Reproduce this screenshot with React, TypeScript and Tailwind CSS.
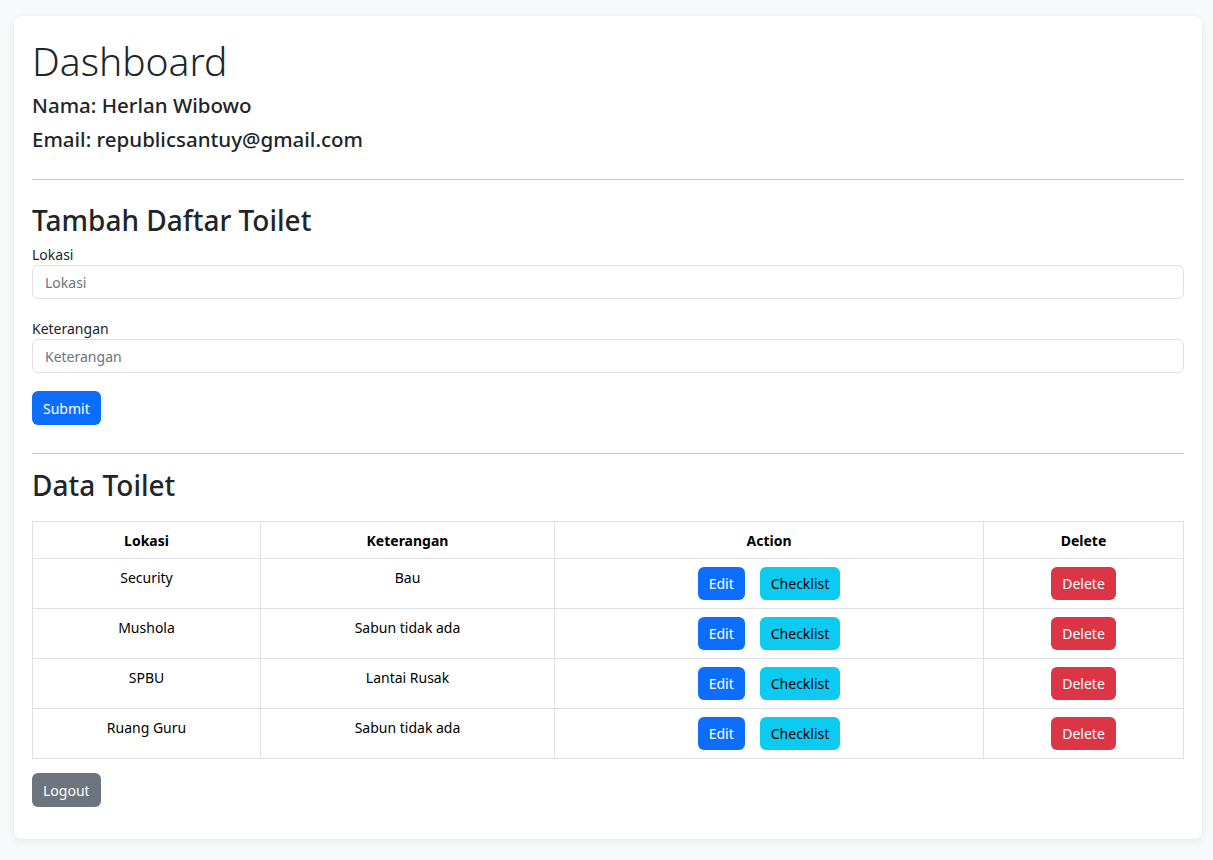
const rows = [
  { lokasi: "Security", keterangan: "Bau" },
  { lokasi: "Mushola", keterangan: "Sabun tidak ada" },
  { lokasi: "SPBU", keterangan: "Lantai Rusak" },
  { lokasi: "Ruang Guru", keterangan: "Sabun tidak ada" },
];

const font = { fontFamily: '"Noto Sans", "Open Sans", sans-serif' };

export default function App() {
  return (
    <div className="min-h-[860px] bg-[#f8f9fa] pt-[16px] pb-[22px] text-[#212529]" style={font}>
      <div className="ml-[14px] mr-[11px] rounded-lg bg-white px-[18px] pt-[21px] pb-[32px] shadow-[0_2px_8px_rgba(0,0,0,0.08)]">
        <h1 className="text-[39px] font-light leading-[48px] mb-2">Dashboard</h1>
        <h5 className="text-[20.5px] font-medium leading-[24px] mb-[10px]">Nama: Herlan Wibowo</h5>
        <h5 className="text-[20.5px] font-medium leading-[24px]">Email: republicsantuy@gmail.com</h5>

        <hr className="mt-[28px] mb-[23px] border-t border-[#c8c9ca]" />

        <h2 className="text-[28px] font-medium leading-[34px] mb-[7px]">Tambah Daftar Toilet</h2>
        <form>
          <label className="block text-[14px] leading-[21px]">Lokasi</label>
          <input
            placeholder="Lokasi"
            className="block w-full h-[34px] rounded-md border border-[#dee2e6] px-3 text-[14px] placeholder:text-[#6c757d] outline-none"
          />
          <label className="block text-[14px] leading-[21px] mt-[19px]">Keterangan</label>
          <input
            placeholder="Keterangan"
            className="block w-full h-[34px] rounded-md border border-[#dee2e6] px-3 text-[14px] placeholder:text-[#6c757d] outline-none"
          />
          <button
            type="button"
            className="mt-[18px] h-[34px] rounded-md bg-[#0d6efd] px-[11px] text-[14px] text-white"
          >
            Submit
          </button>
        </form>

        <hr className="mt-[28px] mb-[14px] border-t border-[#c8c9ca]" />

        <h2 className="text-[28px] font-medium leading-[34px] mb-[19px]">Data Toilet</h2>
        <table className="w-full table-fixed border-collapse text-[14px] leading-[21px] text-black">
          <thead>
            <tr>
              <th className="w-[228px] border border-[#dee2e6] px-2 pt-2 pb-[7px] font-bold">Lokasi</th>
              <th className="w-[294px] border border-[#dee2e6] px-2 pt-2 pb-[7px] font-bold">Keterangan</th>
              <th className="w-[429px] border border-[#dee2e6] px-2 pt-2 pb-[7px] font-bold">Action</th>
              <th className="border border-[#dee2e6] px-2 pt-2 pb-[7px] font-bold">Delete</th>
            </tr>
          </thead>
          <tbody>
            {rows.map((r) => (
              <tr key={r.lokasi + r.keterangan}>
                <td className="border border-[#dee2e6] p-2 text-center align-top">{r.lokasi}</td>
                <td className="border border-[#dee2e6] p-2 text-center align-top">{r.keterangan}</td>
                <td className="border border-[#dee2e6] p-2 text-center align-top">
                  <div className="flex justify-center gap-[15px]">
                    <button className="h-[33px] rounded-md bg-[#0d6efd] px-[11px] text-white">Edit</button>
                    <button className="h-[33px] rounded-md bg-[#0dcaf0] px-[11px] text-black">Checklist</button>
                  </div>
                </td>
                <td className="border border-[#dee2e6] p-2 text-center align-top">
                  <button className="h-[33px] rounded-md bg-[#dc3545] px-[11px] text-white">Delete</button>
                </td>
              </tr>
            ))}
          </tbody>
        </table>

        <button className="mt-[14px] h-[34px] rounded-md bg-[#6c757d] px-[11px] text-[14px] text-white">
          Logout
        </button>
      </div>
    </div>
  );
}
